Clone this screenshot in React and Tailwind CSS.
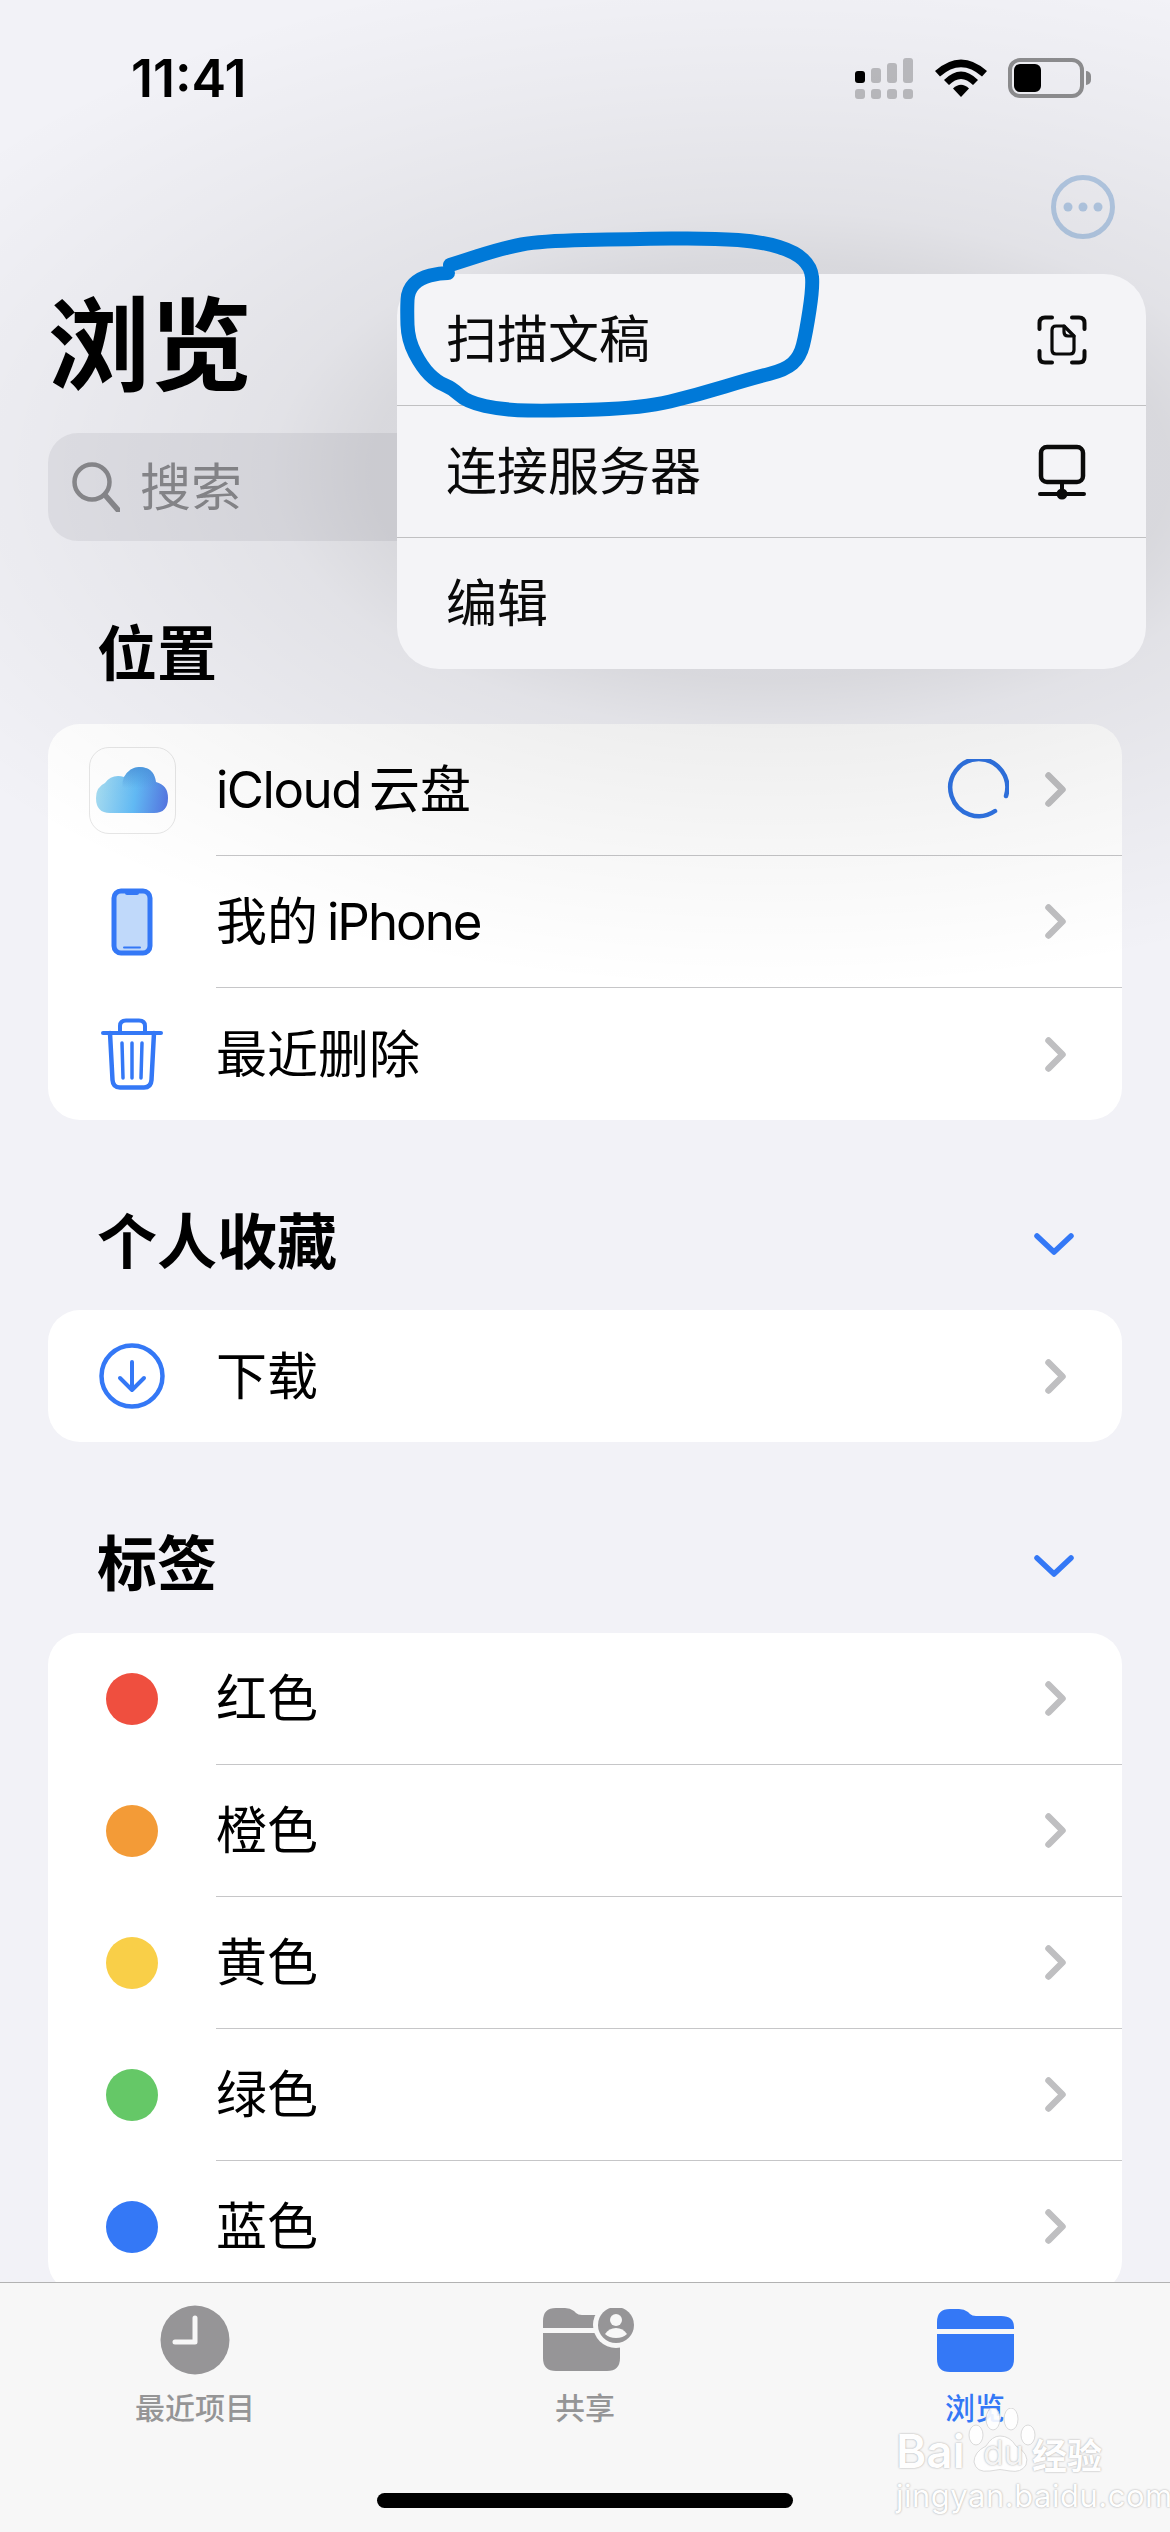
import React from 'react';

const scribblePoints = [
  [448, 273], [440, 273], [420, 278], [408, 290], [407, 310], [408, 340], [422, 367], [437, 382], [452, 388],
  [467, 402], [503, 410], [553, 411], [643, 408], [697, 395], [753, 378], [785, 370], [800, 357], [806, 333],
  [813, 287], [811, 267], [795, 252], [763, 242], [713, 238], [630, 239], [540, 241], [503, 248], [450, 265],
];

// smooth line through the midpoints of the hand drawn points
const smoothPath = (pts) => {
  let d = `M${pts[0][0]} ${pts[0][1]}`;
  for (let i = 1; i < pts.length - 1; i++) {
    const mx = (pts[i][0] + pts[i + 1][0]) / 2;
    const my = (pts[i][1] + pts[i + 1][1]) / 2;
    d += ` Q${pts[i][0]} ${pts[i][1]} ${mx} ${my}`;
  }
  const last = pts[pts.length - 1];
  return `${d} L${last[0]} ${last[1]}`;
};

const Chevron = () => (
  <svg width="21" height="35" viewBox="0 0 21 35" fill="none" stroke="#bfbfc1" strokeWidth="6.5" strokeLinecap="round" strokeLinejoin="round">
    <path d="M3.5 3.5 17.5 17.5 3.5 31.5" />
  </svg>
);

const ChevronDown = () => (
  <svg className="mt-[3px]" width="40" height="24" viewBox="0 0 40 24" fill="none" stroke="#3478f6" strokeWidth="5.5" strokeLinecap="round" strokeLinejoin="round">
    <path d="M3 4 20 20 37 4" />
  </svg>
);

const Spinner = () => (
  <svg width="62" height="62" viewBox="0 0 62 62" fill="none" stroke="#2f73e3" strokeWidth="4.5" strokeLinecap="round">
    <path d="M59 37 A28.5 28.5 0 1 0 48 52" />
  </svg>
);

const CloudIcon = () => (
  <div className="w-[87px] h-[87px] rounded-[20px] border border-[#e6e6e6] bg-white flex items-center justify-center">
    <svg width="72" height="46" viewBox="0 0 72 46">
      <defs>
        <linearGradient id="cloudA" x1="0" y1="0.5" x2="1" y2="0.6">
          <stop offset="0" stopColor="#a6dcf1" />
          <stop offset="0.55" stopColor="#62bbf6" />
          <stop offset="1" stopColor="#5578e2" />
        </linearGradient>
        <linearGradient id="cloudB" x1="0.5" y1="0" x2="0.5" y2="0.7">
          <stop offset="0" stopColor="#4a93dc" stopOpacity="0.85" />
          <stop offset="1" stopColor="#4a93dc" stopOpacity="0" />
        </linearGradient>
      </defs>
      <path d="M14 46 Q0 46 0 31 Q0 20 9 16 Q14 9 22 9 Q25 9 28 10 Q34 0 43 0 Q58 0 60 15 Q72 18 72 31 Q72 46 58 46 Z" fill="url(#cloudA)" />
      <path d="M28 10 Q34 0 43 0 Q58 0 60 15 Q62 18 60 24 L30 30 Q24 20 28 10 Z" fill="url(#cloudB)" />
    </svg>
  </div>
);

const PhoneIcon = () => (
  <svg width="42" height="68" viewBox="0 0 42 68">
    <rect x="3" y="3" width="36" height="62" rx="7" fill="#c0d9fa" stroke="#3478f6" strokeWidth="5" />
    <path d="M14 3 H28 V5 Q28 7 26 7 H16 Q14 7 14 5 Z" fill="#3478f6" />
    <path d="M13 59.5 H29" stroke="#3478f6" strokeWidth="2" strokeLinecap="round" />
  </svg>
);

const TrashIcon = () => (
  <svg width="64" height="72" viewBox="0 0 64 72" fill="none" stroke="#3478f6" strokeLinecap="round" strokeLinejoin="round">
    <path d="M3 15 H61" strokeWidth="4" />
    <path d="M20 14 V8 Q20 2.5 26 2.5 H39 Q45 2.5 45 8 V14" strokeWidth="4" />
    <path d="M10 15 L12.5 62 Q13 69.5 20 69.5 H44 Q51 69.5 51.5 62 L54 15" strokeWidth="4.5" />
    <path d="M22 25 L23 60 M32 25 V60 M42 25 L41 60" strokeWidth="3.5" />
  </svg>
);

const DownloadIcon = () => (
  <svg width="66" height="66" viewBox="0 0 66 66" fill="none" stroke="#3478f6" strokeLinecap="round" strokeLinejoin="round">
    <circle cx="33" cy="33" r="30.5" strokeWidth="4.5" />
    <path d="M33 19 V47 M21 35 33 47 45 35" strokeWidth="4" />
  </svg>
);

const ScanIcon = () => (
  <svg width="50" height="50" viewBox="0 0 50 50" fill="none" stroke="#0a0a0a" strokeLinecap="round" strokeLinejoin="round">
    <g strokeWidth="4">
      <path d="M2.5 14 V8 Q2.5 2.5 8 2.5 H15" />
      <path d="M35 2.5 H42 Q47.5 2.5 47.5 8 V14" />
      <path d="M2.5 36 V42 Q2.5 47.5 8 47.5 H15" />
      <path d="M35 47.5 H42 Q47.5 47.5 47.5 42 V36" />
    </g>
    <g strokeWidth="3.2">
      <path d="M19 11 H27 L37 21 V35 Q37 39 33 39 H19 Q15 39 15 35 V15 Q15 11 19 11 Z" />
      <path d="M27 11 V17 Q27 21 31 21 H37" />
    </g>
  </svg>
);

const ServerIcon = () => (
  <svg width="50" height="56" viewBox="0 0 50 56" fill="none" stroke="#0a0a0a" strokeLinecap="round" strokeLinejoin="round">
    <rect x="4" y="3" width="42" height="35" rx="6" strokeWidth="4.5" />
    <path d="M25 38 V50 M3 50 H47" strokeWidth="4" />
    <circle cx="25" cy="50" r="5.5" fill="#0a0a0a" stroke="none" />
  </svg>
);

const Dot = ({ color }) => <div className={`w-[52px] h-[52px] rounded-full ${color}`} />;

const Row = ({ icon, label, last, extra }) => (
  <div className="h-[132px] flex items-center">
    <div className="w-[168px] shrink-0 flex items-center justify-center">{icon}</div>
    <div className={`flex-1 h-full flex items-center justify-between pr-[56px] ${last ? '' : 'border-b border-[#c6c6c8]'}`}>
      <span className="text-[51px] leading-none text-black">{label}</span>
      <div className="flex items-center gap-[36px]">
        {extra}
        <Chevron />
      </div>
    </div>
  </div>
);

const SectionHeader = ({ title, collapse, className }) => (
  <div className={`h-[80px] flex items-center justify-between pl-[97px] pr-[96px] ${className}`}>
    <span className="text-[60px] leading-none font-bold text-black">{title}</span>
    {collapse && <ChevronDown />}
  </div>
);

const FolderShape = ({ fill }) => (
  <g fill={fill}>
    <path d="M0 20 V13 Q0 0 13 0 H22 Q27 0 31 3 L33 5 Q35 7 39 7 H64 Q77 7 77 18 V20 Z" />
    <path d="M0 25 H77 V50 Q77 63 64 63 H13 Q0 63 0 50 Z" />
  </g>
);

const TabItem = ({ icon, label, active }) => (
  <div className="flex-1 flex flex-col items-center">
    <div className="h-[70px] flex items-center justify-center">{icon}</div>
    <span className={`mt-[14px] text-[30px] leading-[38px] font-medium ${active ? 'text-[#3478f6]' : 'text-[#959596]'}`}>{label}</span>
  </div>
);

const StatusIcons = () => (
  <div className="flex items-center">
    <svg width="58" height="42" viewBox="0 0 58 42">
      <rect x="0" y="14" width="10" height="12" rx="3" fill="#000" />
      <rect x="16" y="11" width="10" height="15" rx="3" fill="#bcbcc0" />
      <rect x="32" y="6" width="10" height="20" rx="3" fill="#bcbcc0" />
      <rect x="48" y="1" width="10" height="25" rx="3" fill="#bcbcc0" />
      <rect x="0" y="32" width="10" height="10" rx="3" fill="#bcbcc0" />
      <rect x="16" y="32" width="10" height="10" rx="3" fill="#bcbcc0" />
      <rect x="32" y="32" width="10" height="10" rx="3" fill="#bcbcc0" />
      <rect x="48" y="32" width="10" height="10" rx="3" fill="#bcbcc0" />
    </svg>
    <svg className="ml-[22px]" width="52" height="38" viewBox="0 0 52 38">
      <path d="M0 12 Q26 -11 52 12 L47 17.5 Q26 -1 5 17.5 Z" fill="#000" />
      <path d="M9 21 Q26 4 43 21 L38 26 Q26 14 14 26 Z" fill="#000" />
      <path d="M18 29.5 Q26 22 34 29.5 L26 38 Z" fill="#000" />
    </svg>
    <div className="ml-[21px] w-[76px] h-[40px] rounded-[12px] border-[4px] border-[#8e8e90] p-[2px] flex">
      <div className="w-[27px] h-full rounded-[6px] bg-black" />
    </div>
    <div className="ml-[2px] w-[5px] h-[14px] rounded-r-full bg-[#8e8e90]" />
  </div>
);

const Watermark = () => (
  <div className="absolute left-[896px] top-[2408px] z-20 text-white whitespace-nowrap [text-shadow:0_0_2px_rgba(0,0,0,0.4)] opacity-90">
    <svg className="absolute left-[70px] top-0" width="70" height="66" viewBox="0 0 70 66" fill="#fff" stroke="#d8d8d8" strokeWidth="1">
      <ellipse cx="10" cy="27" rx="7" ry="10" />
      <ellipse cx="27" cy="11" rx="7" ry="11" />
      <ellipse cx="45" cy="11" rx="7" ry="11" />
      <ellipse cx="62" cy="27" rx="7" ry="10" />
      <path d="M34 28 Q44 28 50 38 Q64 46 60 57 Q55 65 44 63 Q34 60 24 63 Q10 65 8 54 Q8 44 20 38 Q26 28 34 28 Z" />
    </svg>
    <div className="relative h-[68px] flex items-end pb-[2px]">
      <span className="text-[46px] leading-none font-semibold w-[87px]">Bai</span>
      <span className="text-[34px] leading-none text-[#f4f4f4] w-[49px] pb-[4px]">du</span>
      <span className="text-[35px] leading-none font-bold">经验</span>
    </div>
    <div className="text-[31px] leading-[36px] tracking-[0.5px] mt-[2px]">jingyan.baidu.com</div>
  </div>
);

export default function App() {
  return (
    <div className="relative w-[1170px] h-[2532px] overflow-hidden bg-[#f2f2f7] flex flex-col font-['Inter','Noto_Sans_CJK_SC',sans-serif]">
      <div className="flex-1 min-h-0 overflow-hidden">
        {/* status bar */}
        <div className="h-[156px] flex items-start justify-between pl-[131px] pr-[79px] pt-[51px]">
          <span className="text-[52px] leading-[56px] font-semibold text-black">11:41</span>
          <div className="pt-[6px]">
            <StatusIcons />
          </div>
        </div>

        {/* nav */}
        <div className="h-[102px] flex justify-end pr-[55px] pt-[19px]">
          <svg width="64" height="64" viewBox="0 0 64 64" fill="none">
            <circle cx="32" cy="32" r="29.5" stroke="#b5cbe6" strokeWidth="5" />
            <circle cx="17" cy="32" r="4.5" fill="#b5cbe6" />
            <circle cx="32" cy="32" r="4.5" fill="#b5cbe6" />
            <circle cx="47" cy="32" r="4.5" fill="#b5cbe6" />
          </svg>
        </div>

        <div className="h-[175px] pl-[48px] flex items-center">
          <h1 className="text-[102px] leading-none font-bold text-black">浏览</h1>
        </div>

        {/* search */}
        <div className="mx-[48px] h-[108px] rounded-[30px] bg-[#e3e3e9] flex items-center pl-[24px]">
          <svg width="48" height="50" viewBox="0 0 48 50" fill="none" stroke="#8a8a8e" strokeLinecap="round">
            <circle cx="20" cy="20" r="17.5" strokeWidth="4.5" />
            <path d="M33 33 46 48" strokeWidth="5.5" />
          </svg>
          <span className="ml-[20px] text-[51px] leading-none text-[#8a8a8e]">搜索</span>
        </div>

        <SectionHeader title="位置" className="mt-[73px] mb-[30px]" />
        <div className="mx-[48px] bg-white rounded-[32px] overflow-hidden">
          <Row
            icon={<CloudIcon />}
            label={<><span className="tracking-[-1.5px]">iCloud</span><span className="ml-[8px]">云盘</span></>}
            extra={<Spinner />}
          />
          <Row
            icon={<PhoneIcon />}
            label={<>我的<span className="ml-[9px] tracking-[-2px]">iPhone</span></>}
          />
          <Row icon={<TrashIcon />} label="最近删除" last />
        </div>

        <SectionHeader title="个人收藏" collapse className="mt-[82px] mb-[28px]" />
        <div className="mx-[48px] bg-white rounded-[32px] overflow-hidden">
          <Row icon={<DownloadIcon />} label="下载" last />
        </div>

        <SectionHeader title="标签" collapse className="mt-[82px] mb-[29px]" />
        <div className="mx-[48px] bg-white rounded-[32px] overflow-hidden">
          <Row icon={<Dot color="bg-[#ef4f3f]" />} label="红色" />
          <Row icon={<Dot color="bg-[#f39b37]" />} label="橙色" />
          <Row icon={<Dot color="bg-[#f9cf48]" />} label="黄色" />
          <Row icon={<Dot color="bg-[#65c867]" />} label="绿色" />
          <Row icon={<Dot color="bg-[#3478f6]" />} label="蓝色" />
        </div>
      </div>

      {/* tab bar */}
      <div className="relative h-[250px] shrink-0 bg-[#f7f7f7] border-t border-[#b2b2b2] flex items-start pt-[22px]">
        <TabItem
          label="最近项目"
          icon={
            <svg width="70" height="70" viewBox="0 0 70 70" fill="none">
              <circle cx="35" cy="35" r="34.5" fill="#969597" />
              <path d="M35 13 V37 H15" stroke="#f7f7f7" strokeWidth="5" strokeLinecap="round" strokeLinejoin="round" />
            </svg>
          }
        />
        <TabItem
          label="共享"
          icon={
            <svg className="ml-[8px]" width="92" height="64" viewBox="0 0 92 64">
              <FolderShape fill="#969597" />
              <circle cx="73" cy="17" r="23" fill="#f7f7f7" />
              <circle cx="73" cy="17" r="18" fill="#969597" />
              <circle cx="73" cy="12" r="6" fill="#f7f7f7" />
              <path d="M62 26 Q66 20 73 20 Q80 20 84 26 Q80 30 73 30 Q66 30 62 26 Z" fill="#f7f7f7" />
            </svg>
          }
        />
        <TabItem
          label="浏览"
          active
          icon={
            <svg width="77" height="63" viewBox="0 0 77 63">
              <FolderShape fill="#3478f6" />
            </svg>
          }
        />
        <div className="absolute left-[377px] top-[210px] w-[416px] h-[15px] rounded-full bg-black" />
      </div>

      {/* dimming glow behind the menu */}
      <div className="absolute left-0 top-0 w-[1170px] h-[1150px] pointer-events-none z-[5] bg-[radial-gradient(ellipse_1000px_520px_at_771px_471px,rgba(0,0,0,0.11)_0%,rgba(0,0,0,0.105)_40%,rgba(0,0,0,0.068)_50%,rgba(0,0,0,0.03)_75%,rgba(0,0,0,0)_100%)]" />

      {/* context menu */}
      <div className="absolute left-[397px] top-[274px] w-[749px] rounded-[42px] bg-[#f4f4f7] z-10">
        <div className="h-[132px] flex items-center justify-between pl-[49px] pr-[59px] border-b border-[#c0c0c2]">
          <span className="text-[51px] leading-none text-[#0a0a0a]">扫描文稿</span>
          <ScanIcon />
        </div>
        <div className="h-[132px] flex items-center justify-between pl-[49px] pr-[59px] border-b border-[#c0c0c2]">
          <span className="text-[51px] leading-none text-[#0a0a0a]">连接服务器</span>
          <ServerIcon />
        </div>
        <div className="h-[131px] flex items-center pl-[49px]">
          <span className="text-[51px] leading-none text-[#0a0a0a]">编辑</span>
        </div>
      </div>

      {/* hand drawn marker round the first item */}
      <svg className="absolute left-0 top-0 z-20 pointer-events-none" width="1170" height="500" viewBox="0 0 1170 500" fill="none">
        <path d={smoothPath(scribblePoints)} stroke="#0079d8" strokeWidth="14" strokeLinecap="round" strokeLinejoin="round" />
      </svg>

      <Watermark />
    </div>
  );
}
